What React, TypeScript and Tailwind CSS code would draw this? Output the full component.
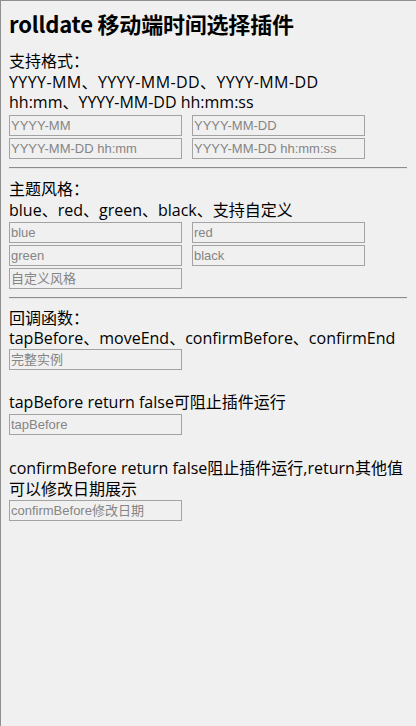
import React from 'react';

const font = "font-['Segoe_UI','Open_Sans','Noto_Sans_CJK_SC',sans-serif]";

const Field: React.FC<{ placeholder: string }> = ({ placeholder }) => (
  <input
    placeholder={placeholder}
    className="h-[21px] w-[173px] border border-[#a3a3a3] bg-transparent px-[1px] text-[13px] text-black outline-none placeholder:text-[#858585] font-['Liberation_Sans','Noto_Sans_CJK_SC',sans-serif]"
  />
);

const Rule = () => <div className="mt-[8px] h-[2px] border-t border-[#8c8c8c] border-b border-b-[#e4e4e4]" />;

export default function App() {
  return (
    <div className={`min-h-[726px] bg-[#f0f0f0] border-t border-l border-[#8f8f8f] pl-[8px] pr-[9px] text-black ${font}`}>
      <h1 className="mt-[7px] text-[22px] font-bold leading-[30px] font-['Noto_Sans_CJK_SC',sans-serif] tracking-[-0.2px]">
        rolldate 移动端时间选择插件
      </h1>

      {/* 格式 */}
      <div className="mt-[13px] text-[16px] leading-[20.5px]">
        <p>支持格式：</p>
        <p className="tracking-[0.4px]">YYYY-MM、YYYY-MM-DD、YYYY-MM-DD</p>
        <p>hh:mm、YYYY-MM-DD hh:mm:ss</p>
      </div>
      <div className="mt-[2px] grid grid-cols-[173px_173px] gap-x-[10px] gap-y-[2px]">
        <Field placeholder="YYYY-MM" />
        <Field placeholder="YYYY-MM-DD" />
        <Field placeholder="YYYY-MM-DD hh:mm" />
        <Field placeholder="YYYY-MM-DD hh:mm:ss" />
      </div>
      <Rule />

      {/* 主题 */}
      <div className="mt-[10px] text-[16px] leading-[21px]">
        <p>主题风格：</p>
        <p>blue、red、green、black、支持自定义</p>
      </div>
      <div className="mt-[1px] grid grid-cols-[173px_173px] gap-x-[10px] gap-y-[2px]">
        <Field placeholder="blue" />
        <Field placeholder="red" />
        <Field placeholder="green" />
        <Field placeholder="black" />
        <Field placeholder="自定义风格" />
      </div>
      <Rule />

      {/* 回调 */}
      <div className="mt-[9px] text-[16px] leading-[20.5px]">
        <p>回调函数：</p>
        <p>tapBefore、moveEnd、confirmBefore、confirmEnd</p>
      </div>
      <div className="mt-0 flex">
        <Field placeholder="完整实例" />
      </div>

      <p className="mt-[22px] text-[16px] leading-[20.5px]">tapBefore return false可阻止插件运行</p>
      <div className="mt-[2px] flex">
        <Field placeholder="tapBefore" />
      </div>

      <p className="mt-[23px] text-[16px] leading-[20.5px]">
        confirmBefore return false阻止插件运行,return其他值可以修改日期展示
      </p>
      <div className="mt-[1px] flex">
        <Field placeholder="confirmBefore修改日期" />
      </div>
    </div>
  );
}
